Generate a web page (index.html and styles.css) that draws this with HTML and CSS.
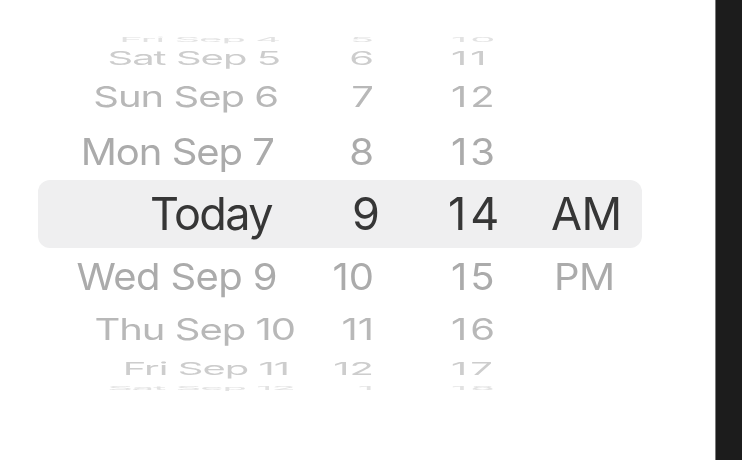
FILE: index.html
```html
<!DOCTYPE html>
<html>
<head>
<meta charset="utf-8">
<link rel="stylesheet" href="styles.css">
</head>
<body>
<div class="screen">
  <div class="stage">
    <div class="picker">
      <div class="band"></div>
      <div class="col date">
        <div class="row r0"><span>Fri Sep 4</span></div>
        <div class="row r1"><span>Sat Sep 5</span></div>
        <div class="row r2"><span>Sun Sep 6</span></div>
        <div class="row r3"><span>Mon Sep 7</span></div>
        <div class="row r4 sel"><span>Today</span></div>
        <div class="row r5"><span>Wed Sep 9</span></div>
        <div class="row r6 wide"><span>Thu Sep 10</span></div>
        <div class="row r7 wide"><span>Fri Sep 11</span></div>
        <div class="row r8 wide"><span>Sat Sep 12</span></div>
      </div>
      <div class="col hour">
        <div class="row r0"><span>5</span></div>
        <div class="row r1"><span>6</span></div>
        <div class="row r2"><span>7</span></div>
        <div class="row r3"><span>8</span></div>
        <div class="row r4 sel"><span>9</span></div>
        <div class="row r5"><span>10</span></div>
        <div class="row r6"><span>11</span></div>
        <div class="row r7"><span>12</span></div>
        <div class="row r8"><span>1</span></div>
      </div>
      <div class="col minute">
        <div class="row r0"><span>10</span></div>
        <div class="row r1"><span>11</span></div>
        <div class="row r2"><span>12</span></div>
        <div class="row r3"><span>13</span></div>
        <div class="row r4 sel"><span>14</span></div>
        <div class="row r5"><span>15</span></div>
        <div class="row r6"><span>16</span></div>
        <div class="row r7"><span>17</span></div>
        <div class="row r8"><span>18</span></div>
      </div>
      <div class="col ampm">
        <div class="row r0"></div>
        <div class="row r1"></div>
        <div class="row r2"></div>
        <div class="row r3"></div>
        <div class="row r4 sel"><span>AM</span></div>
        <div class="row r5"><span>PM</span></div>
        <div class="row r6"></div>
        <div class="row r7"></div>
        <div class="row r8"></div>
      </div>
    </div>
  </div>
  <div class="edge"></div>
</div>
</body>
</html>
```

FILE: styles.css
```css
html, body {
  margin: 0;
  padding: 0;
  background: #ffffff;
}

*, *::before, *::after {
  box-sizing: border-box;
}

.screen {
  width: 742px;
  height: 460px;
  display: flex;
  overflow: hidden;
  font-family: Inter, "Liberation Sans", sans-serif;
}

.stage {
  flex: 1;
  min-width: 0;
  background: #ffffff;
  padding-top: 34px;
}

.edge {
  width: 27px;
  flex-shrink: 0;
  background: #1c1c1c;
  border-left: 1px solid #7a7a7a;
}

.picker {
  position: relative;
  display: flex;
  height: 357px;
  overflow: hidden;
  filter: blur(0.35px);
}

.band {
  position: absolute;
  left: 38px;
  top: 146px;
  width: 604px;
  height: 68px;
  border-radius: 12px;
  background: #efeff0;
}

.col {
  position: relative;
  display: flex;
  flex-direction: column;
  flex-shrink: 0;
}

.row {
  display: flex;
  align-items: center;
  font-size: 40px;
  line-height: 1;
  white-space: nowrap;
}

.row span {
  display: block;
}

/* row geometry of the wheel (cylinder projection) */
.r0 { height: 12px; color: #e2e2e2; }
.r1 { height: 24px; color: #cdcdcd; }
.r2 { height: 54px; color: #b8b8b8; }
.r3 { height: 56px; color: #ababab; }
.r4 { height: 68px; color: #363636; font-size: 45px; }
.r5 { height: 60px; color: #ababab; }
.r6 { height: 46px; color: #b8b8b8; }
.r7 { height: 32px; color: #cdcdcd; }
.r8 { height: 6px; color: #e2e2e2; }

.r0 span { transform: scaleY(0.16); }
.r1 span { transform: scaleY(0.47); }
.r2 span { transform: scaleY(0.72); }
.r3 span { transform: scaleY(0.92); }
.r5 span { transform: scaleY(0.93); }
.r6 span { transform: scaleY(0.74); }
.r7 span { transform: scaleY(0.44); }
.r8 span { transform: scaleY(0.12); }

.date {
  width: 278px;
  align-items: flex-end;
  letter-spacing: -1px;
}
.date .r0, .date .r1 { margin-right: -2px; }
.date .r3 { padding-right: 4px; }
.date .r5 { padding-right: 1px; letter-spacing: -0.6px; }
.date .sel { padding-right: 6px; letter-spacing: -1.6px; }
.date .wide { margin-right: -17px; }
.date .r7 { margin-right: -11px; }

.hour {
  width: 96px;
  align-items: flex-end;
}
.hour .sel { margin-right: -6px; }

.minute {
  width: 180px;
  padding-left: 77px;
  align-items: flex-start;
  letter-spacing: 3px;
}
.minute .sel { margin-left: -3px; letter-spacing: 4px; }

.ampm {
  width: 90px;
  align-items: flex-start;
}
.ampm .sel { margin-left: -3px; letter-spacing: -0.5px; }
.ampm .r5 span { letter-spacing: -0.6px; }
```
